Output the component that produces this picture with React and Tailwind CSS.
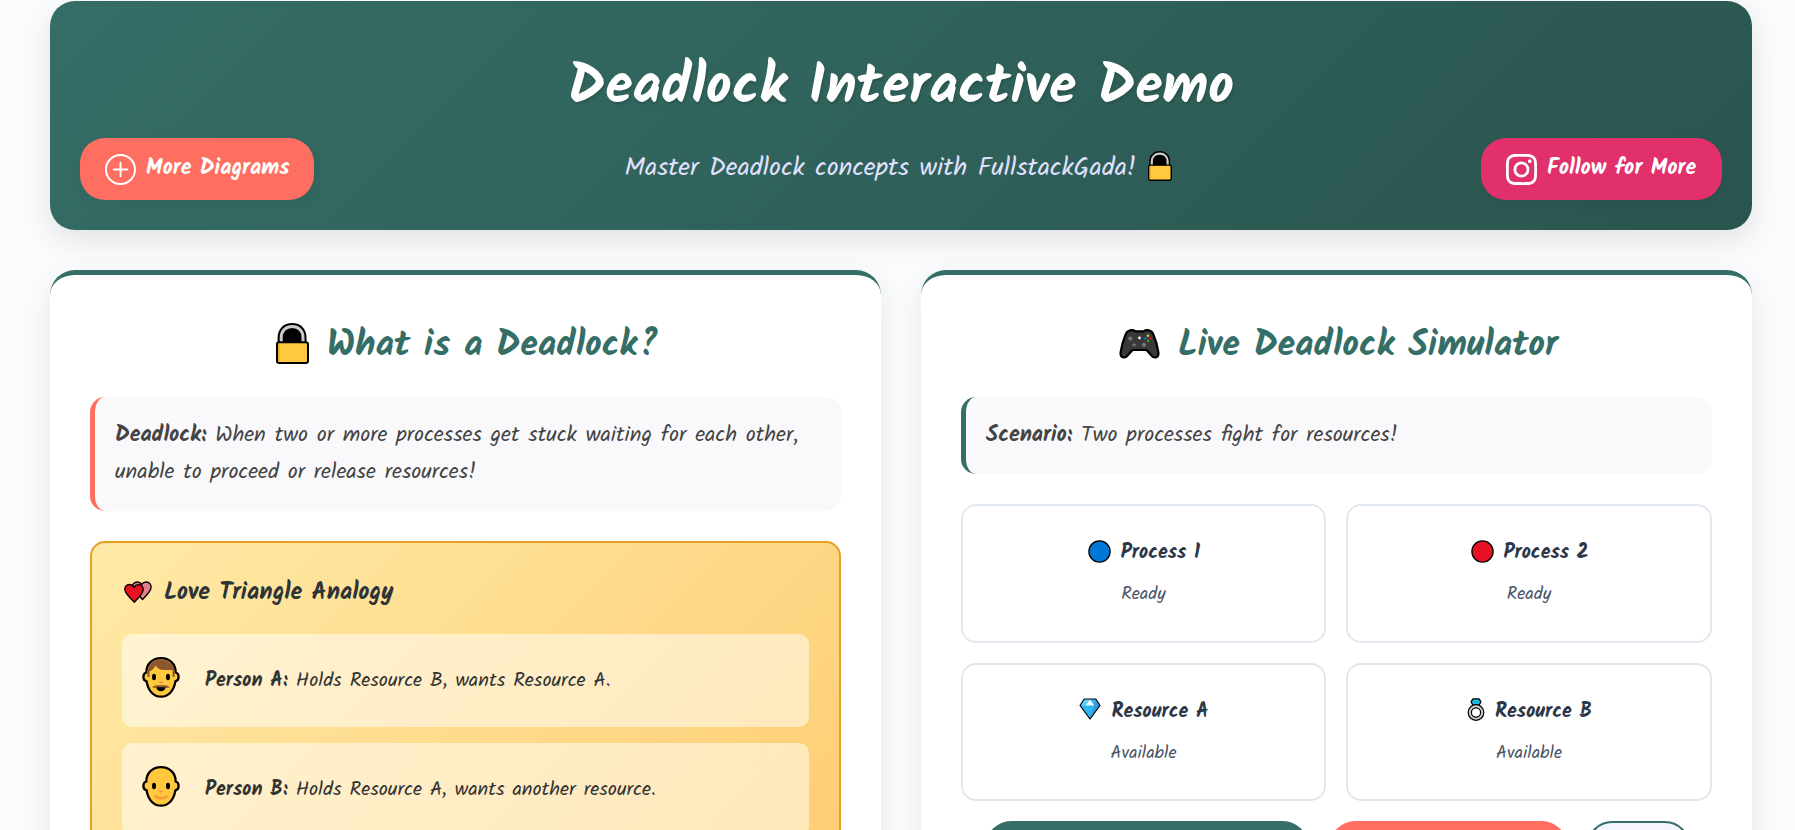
import React from "react";
import { BsInstagram, BsPlusCircle } from "react-icons/bs";

function Lock({ className }) {
  return (
    <svg viewBox="0 0 33 41" className={className}>
      <path d="M1.6 22V14.5C1.6 6 7.500 0 16.200 0S30.500 6 30.500 14.500V22z" fill="#000" />
      <path d="M5.200 21V14.500C5.200 7.700 9.900 3.500 16.200 3.500S27 7.700 27 14.500V21" fill="none" stroke="#ccc" strokeWidth="3" />
      <rect x="1" y="19.300" width="31" height="20.700" rx="2.200" fill="#ffc83d" stroke="#000" strokeWidth="2" />
      <path d="M3 20.500V38.600" stroke="#e9a62f" strokeWidth="1.200" />
    </svg>
  );
}

function Gamepad({ className }) {
  return (
    <svg viewBox="0 0 41 30" className={className}>
      <path
        d="M10.500 1.500c2-.8 4.500-.3 6 .8h8c1.500-1.100 4-1.600 6-.8 1.700.5 3 1.600 3.700 3.500 2.500 6 4.300 12.500 5.200 18.500.5 3.300-1.300 5-3.400 5-1.600 0-2.800-.8-4-2.400L27.500 21h-14L9 26.100c-1.200 1.600-2.400 2.400-4 2.400-2.100 0-3.900-1.700-3.400-5C2.500 17.500 4.300 11 6.800 5c.7-1.900 2-3 3.700-3.500z"
        fill="#383838"
        stroke="#000"
        strokeWidth="2.200"
        strokeLinejoin="round"
      />
      <circle cx="11.300" cy="9.600" r="2.100" fill="#767676" />
      <circle cx="25" cy="15.800" r="2.100" fill="#767676" />
      <path d="M15 13.800v4M13 15.800h4" stroke="#767676" strokeWidth="1.200" />
      <circle cx="20.500" cy="9" r="1.400" fill="#f2f2f2" />
      <circle cx="29" cy="6.800" r="1.200" fill="#ffc83d" />
      <circle cx="26.300" cy="9.400" r="1.200" fill="#0078d7" />
      <circle cx="31.700" cy="9.400" r="1.200" fill="#e81224" />
      <circle cx="29" cy="12" r="1.200" fill="#16c60c" />
    </svg>
  );
}

function Hearts({ className }) {
  return (
    <svg viewBox="0 0 28 22" className={className}>
      <path
        d="M18.500 18.500 9 8C7.500 4.500 9.500 1 13 1c2.200 0 3.800 1 4.700 2.500C18.800 1.800 20.500.9 22.500 1c3.300.2 5.200 3.300 4.400 6.500-.8 3.400-4.700 7.200-8.400 11z"
        fill="#e3808d"
        stroke="#000"
        strokeWidth="1.300"
        strokeLinejoin="round"
      />
      <path
        d="M10.400 21.200C6.500 17.300 1.500 13 .9 9.200.4 6 2.400 3.500 5.300 3.500c2 0 3.900 1.100 4.900 2.900 1-1.900 2.900-2.900 4.900-2.700 2.900.2 4.600 2.700 4 5.700-.8 4-5.200 8-8.700 11.800z"
        fill="#e81224"
        stroke="#000"
        strokeWidth="1.300"
        strokeLinejoin="round"
      />
    </svg>
  );
}

function Face({ bearded, className }) {
  return (
    <svg viewBox="0 0 38 41" className={className}>
      <path
        d="M19 1.200C10.500 1.200 4.300 7 4.300 15.500c-1.800.4-2.900 2-2.900 4.500 0 2.300 1.200 4 3.200 4.400C6 33.500 11.500 39.700 19 39.700s13-6.200 14.400-15.300c2-.4 3.200-2.100 3.200-4.400 0-2.500-1.100-4.100-2.900-4.500C33.700 7 27.500 1.200 19 1.200z"
        fill="#ffc83d"
        stroke="#000"
        strokeWidth="2.300"
      />
      {bearded && (
        <g>
          <path d="M5.500 20v-4.500C5.500 8 11.300 2.500 19 2.500S32.500 8 32.500 15.500V20h-2v-7H22c-4.500 0-7-1.800-8.500-4.500-1 2.500-3 4.500-6 6V20z" fill="#8e562e" />
          <path d="M10.500 30.800c0-1.900 2.500-2.700 5-2.600h7c2.500-.1 5 .7 5 2.600z" fill="#8e562e" />
          <path d="M14.300 30.300h9.400c-.5 2.700-2.300 4-4.700 4s-4.200-1.300-4.700-4z" fill="#000" />
        </g>
      )}
      {!bearded && (
        <path d="M13.500 30.500c1.400 1.300 3.300 1.800 5.500 1.800s4.100-.5 5.500-1.800" fill="none" stroke="#f79a3c" strokeWidth="2.600" strokeLinecap="round" />
      )}
      <ellipse cx="12" cy="20" rx="2" ry="3.300" fill="#000" />
      <ellipse cx="26" cy="20" rx="2" ry="3.300" fill="#000" />
      <path d="M16.500 24.500h5L19 27z" fill="#f58a4b" />
    </svg>
  );
}

function Dot({ className }) {
  return (
    <svg viewBox="0 0 23 23" className={className}>
      <circle cx="11.500" cy="11.500" r="10.600" fill="currentColor" stroke="#000" strokeWidth="1.300" />
    </svg>
  );
}

function Gem({ className }) {
  return (
    <svg viewBox="0 0 22 22" className={className}>
      <path d="M5.200 1h11.600L21 7.500 11 21 1 7.500z" fill="#2cb8ef" />
      <path d="M16.800 1 21 7.500 11 21l4.200-13.500z" fill="#3a96dd" />
      <path d="M5.200 1 1 7.500h6L11 1z" fill="#5fd3f7" />
      <path d="M11 1.300 6.800 7.500h8.400z" fill="#f2f9fd" />
      <path d="M5.200 1h11.600L21 7.500 11 21 1 7.500z" fill="none" stroke="#000" strokeWidth="1.200" strokeLinejoin="round" />
    </svg>
  );
}

function Ring({ className }) {
  return (
    <svg viewBox="0 0 18 23" className={className}>
      <path d="M6 .8h6l2 3-2.500 4.400h-5L4 3.800z" fill="#1cb5e8" stroke="#000" strokeWidth="1.300" strokeLinejoin="round" />
      <circle cx="9" cy="14.500" r="6.200" fill="none" stroke="#000" strokeWidth="4.400" />
      <circle cx="9" cy="14.500" r="6.200" fill="none" stroke="#ccc" strokeWidth="2" />
    </svg>
  );
}

function Panel({ icon, title, children }) {
  return (
    <section className="h-[700px] rounded-[25px] border-t-5 border-[#346e66] bg-white px-10 pt-[42px] shadow-[0_10px_30px_rgba(0,0,0,0.08)]">
      <h2 className="mb-[23px] flex h-[57px] items-center justify-center pl-1 text-[36px] leading-[57px] font-bold text-[#346e66]">
        {icon}
        {title}
      </h2>
      {children}
    </section>
  );
}

function Person({ name, bearded, children }) {
  return (
    <div className="flex h-[93px] items-center rounded-[10px] bg-white/50 px-5 text-[20px] leading-8 text-[#333]">
      <Face bearded={bearded} className="mr-[25px] mb-[7px] h-[41px] w-[38px]" />
      <p>
        <strong>{name}</strong> {children}
      </p>
    </div>
  );
}

function Entity({ icon, name, status }) {
  return (
    <div className="h-[138.5px] rounded-[15px] border-2 border-[#e2e8f0] bg-white pt-[31px] text-center">
      <h3 className="flex h-8 items-center justify-center pl-px text-[20px] leading-8 font-bold text-[#2d3748]">
        {icon}
        {name}
      </h3>
      <p className="mt-[11px] text-[18px] leading-[29px] text-[#4a5568]">{status}</p>
    </div>
  );
}

export default function App() {
  return (
    <div className="h-[830px] overflow-hidden bg-[#fafbfc] px-[50px] pt-px font-['Kalam','Comic_Neue',cursive]">
      <div className="w-[1702px]">
        <header className="h-[229px] rounded-[25px] bg-linear-135 from-[#346e66] to-[#2a554e] px-[30px] pt-[43px] shadow-[0_10px_30px_rgba(0,0,0,0.1)]">
          <h1 className="text-center text-[56px] leading-[89px] font-bold text-white [text-shadow:1px_2px_3px_rgba(0,0,0,0.15)]">
            Deadlock Interactive Demo
          </h1>
          <div className="mt-[5px] grid grid-cols-[1fr_auto_1fr] items-center">
            <button className="flex h-[62px] w-[234px] items-center gap-[10px] rounded-[25px] bg-[#ff6f61] pl-[25px] text-[22px] leading-[35px] font-bold text-white shadow-[0_4px_12px_rgba(0,0,0,0.05)]">
              <BsPlusCircle className="size-[31px] shrink-0" />
              <span className="mb-px whitespace-nowrap">More Diagrams</span>
            </button>
            <p className="flex items-center pr-[5px] pb-[2px] text-[26px] leading-[42px] text-[#e0e0ff]">
              Master Deadlock concepts with FullstackGada!
              <Lock className="mb-1 ml-3 h-[30px] w-6" />
            </p>
            <button className="flex h-[62px] w-[241px] items-center gap-[10px] justify-self-end rounded-[25px] bg-[#e1306c] pl-[25px] text-[22px] leading-[35px] font-bold text-white shadow-[0_4px_12px_rgba(0,0,0,0.05)]">
              <BsInstagram className="size-[31px] shrink-0" />
              <span className="mb-px whitespace-nowrap">Follow for More</span>
            </button>
          </div>
        </header>

        <main className="mt-10 grid grid-cols-2 gap-10">
          <Panel icon={<Lock className="mr-[18px] mb-[5px] h-[41px] w-[33px]" />} title="What is a Deadlock?">
            <p className="mb-[30px] rounded-[15px] border-l-5 border-[#ff6f61] bg-[#f9f9fb] p-5 text-[22px] leading-[37px] text-[#444]">
              <strong>Deadlock:</strong> When two or more processes get stuck waiting for each other, unable to proceed or
              release resources!
            </p>
            <div className="h-[420px] rounded-[15px] border-2 border-[#e6a023] bg-linear-135 from-[#ffeaa7] to-[#fdcb6e] p-[30px] pt-[31px]">
              <h3 className="mb-[22px] flex h-[38px] items-center text-[24px] leading-[38px] font-bold text-[#2d3436]">
                <Hearts className="mr-3 mb-[2px] ml-[2px] h-[22px] w-7" />
                Love Triangle Analogy
              </h3>
              <div className="flex flex-col gap-4">
                <Person name="Person A:" bearded>
                  Holds Resource B, wants Resource A.
                </Person>
                <Person name="Person B:">Holds Resource A, wants another resource.</Person>
              </div>
            </div>
          </Panel>

          <Panel icon={<Gamepad className="mr-[18px] mb-1 h-[30px] w-[41px]" />} title="Live Deadlock Simulator">
            <p className="mb-[30px] rounded-[15px] border-l-5 border-[#346e66] bg-[#f9f9fb] p-5 text-[22px] leading-[37px] text-[#444]">
              <strong>Scenario:</strong> Two processes fight for resources!
            </p>
            <div className="grid grid-cols-[365px_366px] gap-5">
              <Entity icon={<Dot className="mr-[10px] mb-1 size-[23px] text-[#0078d7]" />} name="Process 1" status="Ready" />
              <Entity icon={<Dot className="mr-[10px] mb-1 size-[23px] text-[#e81224]" />} name="Process 2" status="Ready" />
              <Entity icon={<Gem className="mr-[10px] mb-[5px] h-[22px] w-[22px]" />} name="Resource A" status="Available" />
              <Entity icon={<Ring className="mr-[10px] mb-1 h-[23px] w-[18px]" />} name="Resource B" status="Available" />
            </div>
            <div className="mt-5 flex justify-center gap-5 pl-[3px]">
              <button className="mr-[2px] h-[62px] w-[322px] rounded-[25px] bg-[#346e66]" />
              <button className="h-[62px] w-[237px] rounded-[25px] bg-[#ff6f61]" />
              <button className="h-[62px] w-[103px] rounded-[25px] border-2 border-[#346e66] bg-[#f5f5ff]" />
            </div>
          </Panel>
        </main>
      </div>
    </div>
  );
}
